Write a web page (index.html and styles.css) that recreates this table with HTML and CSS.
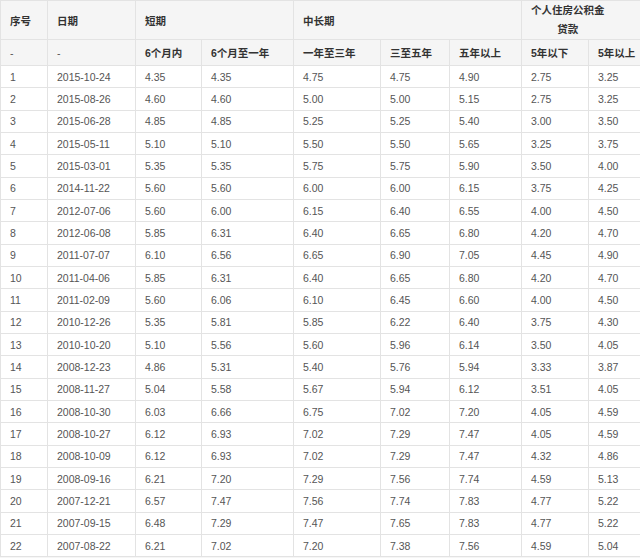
FILE: index.html
```html
<!DOCTYPE html>
<html lang="zh">
<head>
<meta charset="utf-8">
<title>利率表</title>
<link rel="stylesheet" href="styles.css">
</head>
<body>
<table class="rates">
<colgroup>
<col class="c1"><col class="c2"><col class="c3"><col class="c4"><col class="c5"><col class="c6"><col class="c7"><col class="c8"><col class="c9">
</colgroup>
<thead>
<tr class="h1">
<th>序号</th><th>日期</th><th colspan="2">短期</th><th colspan="3">中长期</th><th colspan="2"><span class="wrap">个人住房公积金<br>贷款</span></th>
</tr>
<tr class="h2">
<th class="plain">-</th><th class="plain">-</th><th>6个月内</th><th>6个月至一年</th><th>一年至三年</th><th>三至五年</th><th>五年以上</th><th>5年以下</th><th>5年以上</th>
</tr>
</thead>
<tbody>
<tr><td>1</td><td>2015-10-24</td><td>4.35</td><td>4.35</td><td>4.75</td><td>4.75</td><td>4.90</td><td>2.75</td><td>3.25</td></tr>
<tr><td>2</td><td>2015-08-26</td><td>4.60</td><td>4.60</td><td>5.00</td><td>5.00</td><td>5.15</td><td>2.75</td><td>3.25</td></tr>
<tr><td>3</td><td>2015-06-28</td><td>4.85</td><td>4.85</td><td>5.25</td><td>5.25</td><td>5.40</td><td>3.00</td><td>3.50</td></tr>
<tr><td>4</td><td>2015-05-11</td><td>5.10</td><td>5.10</td><td>5.50</td><td>5.50</td><td>5.65</td><td>3.25</td><td>3.75</td></tr>
<tr><td>5</td><td>2015-03-01</td><td>5.35</td><td>5.35</td><td>5.75</td><td>5.75</td><td>5.90</td><td>3.50</td><td>4.00</td></tr>
<tr><td>6</td><td>2014-11-22</td><td>5.60</td><td>5.60</td><td>6.00</td><td>6.00</td><td>6.15</td><td>3.75</td><td>4.25</td></tr>
<tr><td>7</td><td>2012-07-06</td><td>5.60</td><td>6.00</td><td>6.15</td><td>6.40</td><td>6.55</td><td>4.00</td><td>4.50</td></tr>
<tr><td>8</td><td>2012-06-08</td><td>5.85</td><td>6.31</td><td>6.40</td><td>6.65</td><td>6.80</td><td>4.20</td><td>4.70</td></tr>
<tr><td>9</td><td>2011-07-07</td><td>6.10</td><td>6.56</td><td>6.65</td><td>6.90</td><td>7.05</td><td>4.45</td><td>4.90</td></tr>
<tr><td>10</td><td>2011-04-06</td><td>5.85</td><td>6.31</td><td>6.40</td><td>6.65</td><td>6.80</td><td>4.20</td><td>4.70</td></tr>
<tr><td>11</td><td>2011-02-09</td><td>5.60</td><td>6.06</td><td>6.10</td><td>6.45</td><td>6.60</td><td>4.00</td><td>4.50</td></tr>
<tr><td>12</td><td>2010-12-26</td><td>5.35</td><td>5.81</td><td>5.85</td><td>6.22</td><td>6.40</td><td>3.75</td><td>4.30</td></tr>
<tr><td>13</td><td>2010-10-20</td><td>5.10</td><td>5.56</td><td>5.60</td><td>5.96</td><td>6.14</td><td>3.50</td><td>4.05</td></tr>
<tr><td>14</td><td>2008-12-23</td><td>4.86</td><td>5.31</td><td>5.40</td><td>5.76</td><td>5.94</td><td>3.33</td><td>3.87</td></tr>
<tr><td>15</td><td>2008-11-27</td><td>5.04</td><td>5.58</td><td>5.67</td><td>5.94</td><td>6.12</td><td>3.51</td><td>4.05</td></tr>
<tr><td>16</td><td>2008-10-30</td><td>6.03</td><td>6.66</td><td>6.75</td><td>7.02</td><td>7.20</td><td>4.05</td><td>4.59</td></tr>
<tr><td>17</td><td>2008-10-27</td><td>6.12</td><td>6.93</td><td>7.02</td><td>7.29</td><td>7.47</td><td>4.05</td><td>4.59</td></tr>
<tr><td>18</td><td>2008-10-09</td><td>6.12</td><td>6.93</td><td>7.02</td><td>7.29</td><td>7.47</td><td>4.32</td><td>4.86</td></tr>
<tr><td>19</td><td>2008-09-16</td><td>6.21</td><td>7.20</td><td>7.29</td><td>7.56</td><td>7.74</td><td>4.59</td><td>5.13</td></tr>
<tr><td>20</td><td>2007-12-21</td><td>6.57</td><td>7.47</td><td>7.56</td><td>7.74</td><td>7.83</td><td>4.77</td><td>5.22</td></tr>
<tr><td>21</td><td>2007-09-15</td><td>6.48</td><td>7.29</td><td>7.47</td><td>7.65</td><td>7.83</td><td>4.77</td><td>5.22</td></tr>
<tr><td>22</td><td>2007-08-22</td><td>6.21</td><td>7.02</td><td>7.20</td><td>7.38</td><td>7.56</td><td>4.59</td><td>5.04</td></tr>
</tbody>
</table>
</body>
</html>
```
FILE: styles.css
```css
html, body {
  margin: 0;
  padding: 0;
  background: #f6f6f6;
}
body {
  font-family: "Liberation Sans", "Noto Sans CJK SC", sans-serif;
  font-size: 10.5px;
  color: #555;
}
.rates {
  width: 640px;
  table-layout: fixed;
  border-collapse: collapse;
  background: #fff;
}
.c1 { width: 47px; }
.c2 { width: 88px; }
.c3 { width: 66px; }
.c4 { width: 92px; }
.c5 { width: 87px; }
.c6 { width: 69px; }
.c7 { width: 72px; }
.c8 { width: 67px; }
.c9 { width: 52px; }
.rates th, .rates td {
  border: 1px solid #e3e3e3;
  padding: 0 0 0 9px;
  text-align: left;
  vertical-align: middle;
  white-space: nowrap;
  overflow: hidden;
}
.rates thead th {
  background: #f5f5f5;
  color: #333;
  font-weight: bold;
}
.rates thead th.plain {
  font-weight: normal;
  color: #555;
}
.h1 { height: 39px; }
.h2 { height: 26px; }
.rates tbody tr { height: 22.33px; }
.wrap {
  display: inline-block;
  text-align: center;
  line-height: 19px;
  white-space: normal;
}
```
